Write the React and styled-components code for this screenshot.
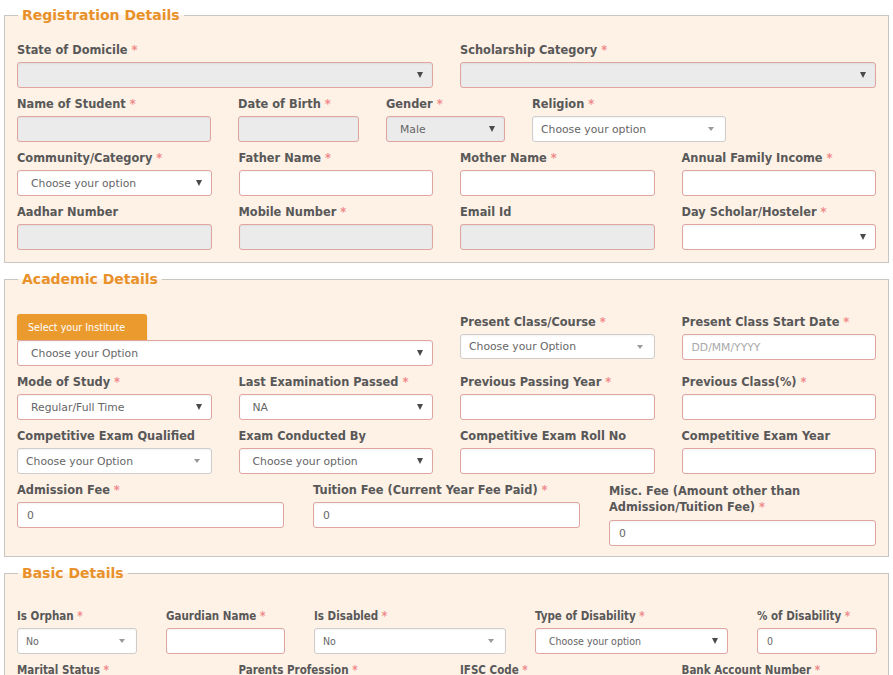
import React from "react";
import styled, { createGlobalStyle } from "styled-components";

const GlobalStyle = createGlobalStyle`
  html, body {
    margin: 0;
    padding: 0;
    background: #fff;
  }
  body {
    font-family: "DejaVu Sans", Verdana, sans-serif;
    color: #555;
  }
  * { box-sizing: border-box; }
`;

const Page = styled.div`
  padding: 6px 4px 20px;
`;

const Section = styled.fieldset`
  margin: 0 0 7px;
  padding: ${(p) => p.$top}px 12px ${(p) => p.$bottom || 12}px;
  border: 1px solid #c9c6c2;
  background: #fef1e6;
  min-width: 0;
`;

const Legend = styled.legend`
  margin-left: 1px;
  padding: 0 4px;
  font-size: 14px;
  line-height: 18px;
  font-weight: bold;
  color: #e8912a;
`;

const Stack = styled.div`
  display: flex;
  flex-direction: column;
  gap: 9px;
`;

const Grid = styled.div`
  display: grid;
  grid-template-columns: repeat(${(p) => p.$cols || 4}, 1fr);
  column-gap: ${(p) => p.$gap || 27}px;
  align-items: ${(p) => p.$align || "start"};
`;

const Row = styled.div`
  display: flex;
  column-gap: ${(p) => p.$gap || 27}px;
  align-items: flex-start;
`;

const FieldWrap = styled.div`
  display: flex;
  flex-direction: column;
  width: ${(p) => (p.$w ? `${p.$w}px` : "auto")};
  flex: none;
  grid-column: span ${(p) => p.$span || 1};
  margin-bottom: ${(p) => p.$mb || 0}px;
  min-width: 0;
`;

const Label = styled.div`
  font-size: ${(p) => (p.$condensed ? "11.5px" : "11.4px")};
  font-family: ${(p) =>
    p.$condensed
      ? `"DejaVu Sans Condensed", "DejaVu Sans", sans-serif`
      : `"DejaVu Sans", Verdana, sans-serif`};
  font-stretch: ${(p) => (p.$condensed ? "condensed" : "normal")};
  font-weight: bold;
  line-height: ${(p) => p.$lh || 14}px;
  color: #585858;
  margin-bottom: 5px;
`;

const Star = styled.span`
  color: #ef8a8a;
`;

const Box = styled.div`
  position: relative;
  height: ${(p) => p.$h || 26}px;
  border: 1px solid ${(p) => (p.$soft ? "#cfcdcb" : "#e0a4a1")};
  border-radius: 3px;
  background: ${(p) => (p.$fill ? "#ebebeb" : "#fff")};
  box-shadow: inset 0 1px 2px rgba(0, 0, 0, 0.05);
  display: flex;
  align-items: center;
  padding: 0 ${(p) => p.$pad || 9}px;
  font-size: ${(p) => (p.$condensed ? "10.5px" : "10.8px")};
  font-family: ${(p) =>
    p.$condensed
      ? `"DejaVu Sans Condensed", "DejaVu Sans", sans-serif`
      : `"DejaVu Sans", Verdana, sans-serif`};
  font-stretch: ${(p) => (p.$condensed ? "condensed" : "normal")};
  color: ${(p) => (p.$placeholder ? "#a9a9a9" : "#666")};
  white-space: nowrap;
  overflow: hidden;
`;

const Arrow = styled.span`
  position: absolute;
  right: ${(p) => (p.$light ? 11 : 9)}px;
  top: 50%;
  transform: translateY(-50%);
  width: 0;
  height: 0;
  border-left: ${(p) => (p.$light ? 3 : 3.5)}px solid transparent;
  border-right: ${(p) => (p.$light ? 3 : 3.5)}px solid transparent;
  border-top: ${(p) => (p.$light ? 4 : 6)}px solid ${(p) => (p.$light ? "#9a9a9a" : "#4a4a4a")};
`;

const InstituteButton = styled.div`
  width: 130px;
  height: 26px;
  background: #eb9a2e;
  border-radius: 3px 3px 0 0;
  color: #fff;
  font-size: 9.6px;
  display: flex;
  align-items: center;
  padding-left: 11px;
  box-shadow: 0 1px 2px rgba(0, 0, 0, 0.15);
`;

function Field({ label, req, w, span, mb, lh, condensed, children }) {
  return (
    <FieldWrap $w={w} $span={span} $mb={mb}>
      <Label $condensed={condensed} $lh={lh}>
        {label}
        {req && <Star> *</Star>}
      </Label>
      {children}
    </FieldWrap>
  );
}

// select look-alike: soft = gray border, fill = gray background
function Select({ value = "", soft, fill, h, condensed }) {
  return (
    <Box $soft={soft} $fill={fill} $h={h} $pad={soft ? 8 : 13} $condensed={condensed}>
      {value}
      <Arrow $light={soft} />
    </Box>
  );
}

function Input({ value = "", fill, placeholder, condensed }) {
  return (
    <Box $fill={fill} $placeholder={!!placeholder} $condensed={condensed}>
      {value || placeholder}
    </Box>
  );
}

function Registration() {
  return (
    <Section $top={19}>
      <Legend>Registration Details</Legend>
      <Stack>
        <Grid>
          <Field label="State of Domicile" req span={2}>
            <Select fill />
          </Field>
          <Field label="Scholarship Category" req span={2}>
            <Select fill />
          </Field>
        </Grid>
        <Row>
          <Field label="Name of Student" req w={194}>
            <Input fill />
          </Field>
          <Field label="Date of Birth" req w={121}>
            <Input fill />
          </Field>
          <Field label="Gender" req w={119}>
            <Select fill value="Male" />
          </Field>
          <Field label="Religion" req w={194}>
            <Select soft value="Choose your option" />
          </Field>
        </Row>
        <Grid>
          <Field label="Community/Category" req>
            <Select value="Choose your option" />
          </Field>
          <Field label="Father Name" req>
            <Input />
          </Field>
          <Field label="Mother Name" req>
            <Input />
          </Field>
          <Field label="Annual Family Income" req>
            <Input />
          </Field>
        </Grid>
        <Grid>
          <Field label="Aadhar Number">
            <Input fill />
          </Field>
          <Field label="Mobile Number" req>
            <Input fill />
          </Field>
          <Field label="Email Id">
            <Input fill />
          </Field>
          <Field label="Day Scholar/Hosteler" req>
            <Select />
          </Field>
        </Grid>
      </Stack>
    </Section>
  );
}

function Academic() {
  return (
    <Section $top={26} $bottom={10}>
      <Legend>Academic Details</Legend>
      <Stack>
        <Grid $align="end">
          <FieldWrap $span={2}>
            <InstituteButton>Select your Institute</InstituteButton>
            <Select value="Choose your Option" />
          </FieldWrap>
          <Field label="Present Class/Course" req mb={7}>
            <Select soft h={25} value="Choose your Option" />
          </Field>
          <Field label="Present Class Start Date" req mb={6}>
            <Input placeholder="DD/MM/YYYY" />
          </Field>
        </Grid>
        <Grid>
          <Field label="Mode of Study" req>
            <Select value="Regular/Full Time" />
          </Field>
          <Field label="Last Examination Passed" req>
            <Select value="NA" />
          </Field>
          <Field label="Previous Passing Year" req>
            <Input />
          </Field>
          <Field label="Previous Class(%)" req>
            <Input />
          </Field>
        </Grid>
        <Grid>
          <Field label="Competitive Exam Qualified">
            <Select soft value="Choose your Option" />
          </Field>
          <Field label="Exam Conducted By">
            <Select value="Choose your option" />
          </Field>
          <Field label="Competitive Exam Roll No">
            <Input />
          </Field>
          <Field label="Competitive Exam Year">
            <Input />
          </Field>
        </Grid>
        <Grid $cols={3} $gap={29}>
          <Field label="Admission Fee" req>
            <Input value="0" />
          </Field>
          <Field label="Tuition Fee (Current Year Fee Paid)" req>
            <Input value="0" />
          </Field>
          <Field label="Misc. Fee (Amount other than Admission/Tuition Fee)" req lh={16}>
            <Input value="0" />
          </Field>
        </Grid>
      </Stack>
    </Section>
  );
}

function Basic() {
  return (
    <Section $top={27}>
      <Legend>Basic Details</Legend>
      <Stack>
        <Row $gap={29}>
          <Field condensed label="Is Orphan" req w={120}>
            <Select condensed soft value="No" />
          </Field>
          <Field condensed label="Gaurdian Name" req w={119}>
            <Input condensed />
          </Field>
          <Field condensed label="Is Disabled" req w={192}>
            <Select condensed soft value="No" />
          </Field>
          <Field condensed label="Type of Disability" req w={193}>
            <Select condensed value="Choose your option" />
          </Field>
          <Field condensed label="% of Disability" req w={120}>
            <Input condensed value="0" />
          </Field>
        </Row>
        <Grid>
          <Field condensed label="Marital Status" req>
            <Select condensed value="Choose your option" />
          </Field>
          <Field condensed label="Parents Profession" req>
            <Select condensed value="Choose your option" />
          </Field>
          <Field condensed label="IFSC Code" req>
            <Input condensed />
          </Field>
          <Field condensed label="Bank Account Number" req>
            <Input condensed />
          </Field>
        </Grid>
      </Stack>
    </Section>
  );
}

export default function App() {
  return (
    <>
      <GlobalStyle />
      <Page>
        <Registration />
        <Academic />
        <Basic />
      </Page>
    </>
  );
}
